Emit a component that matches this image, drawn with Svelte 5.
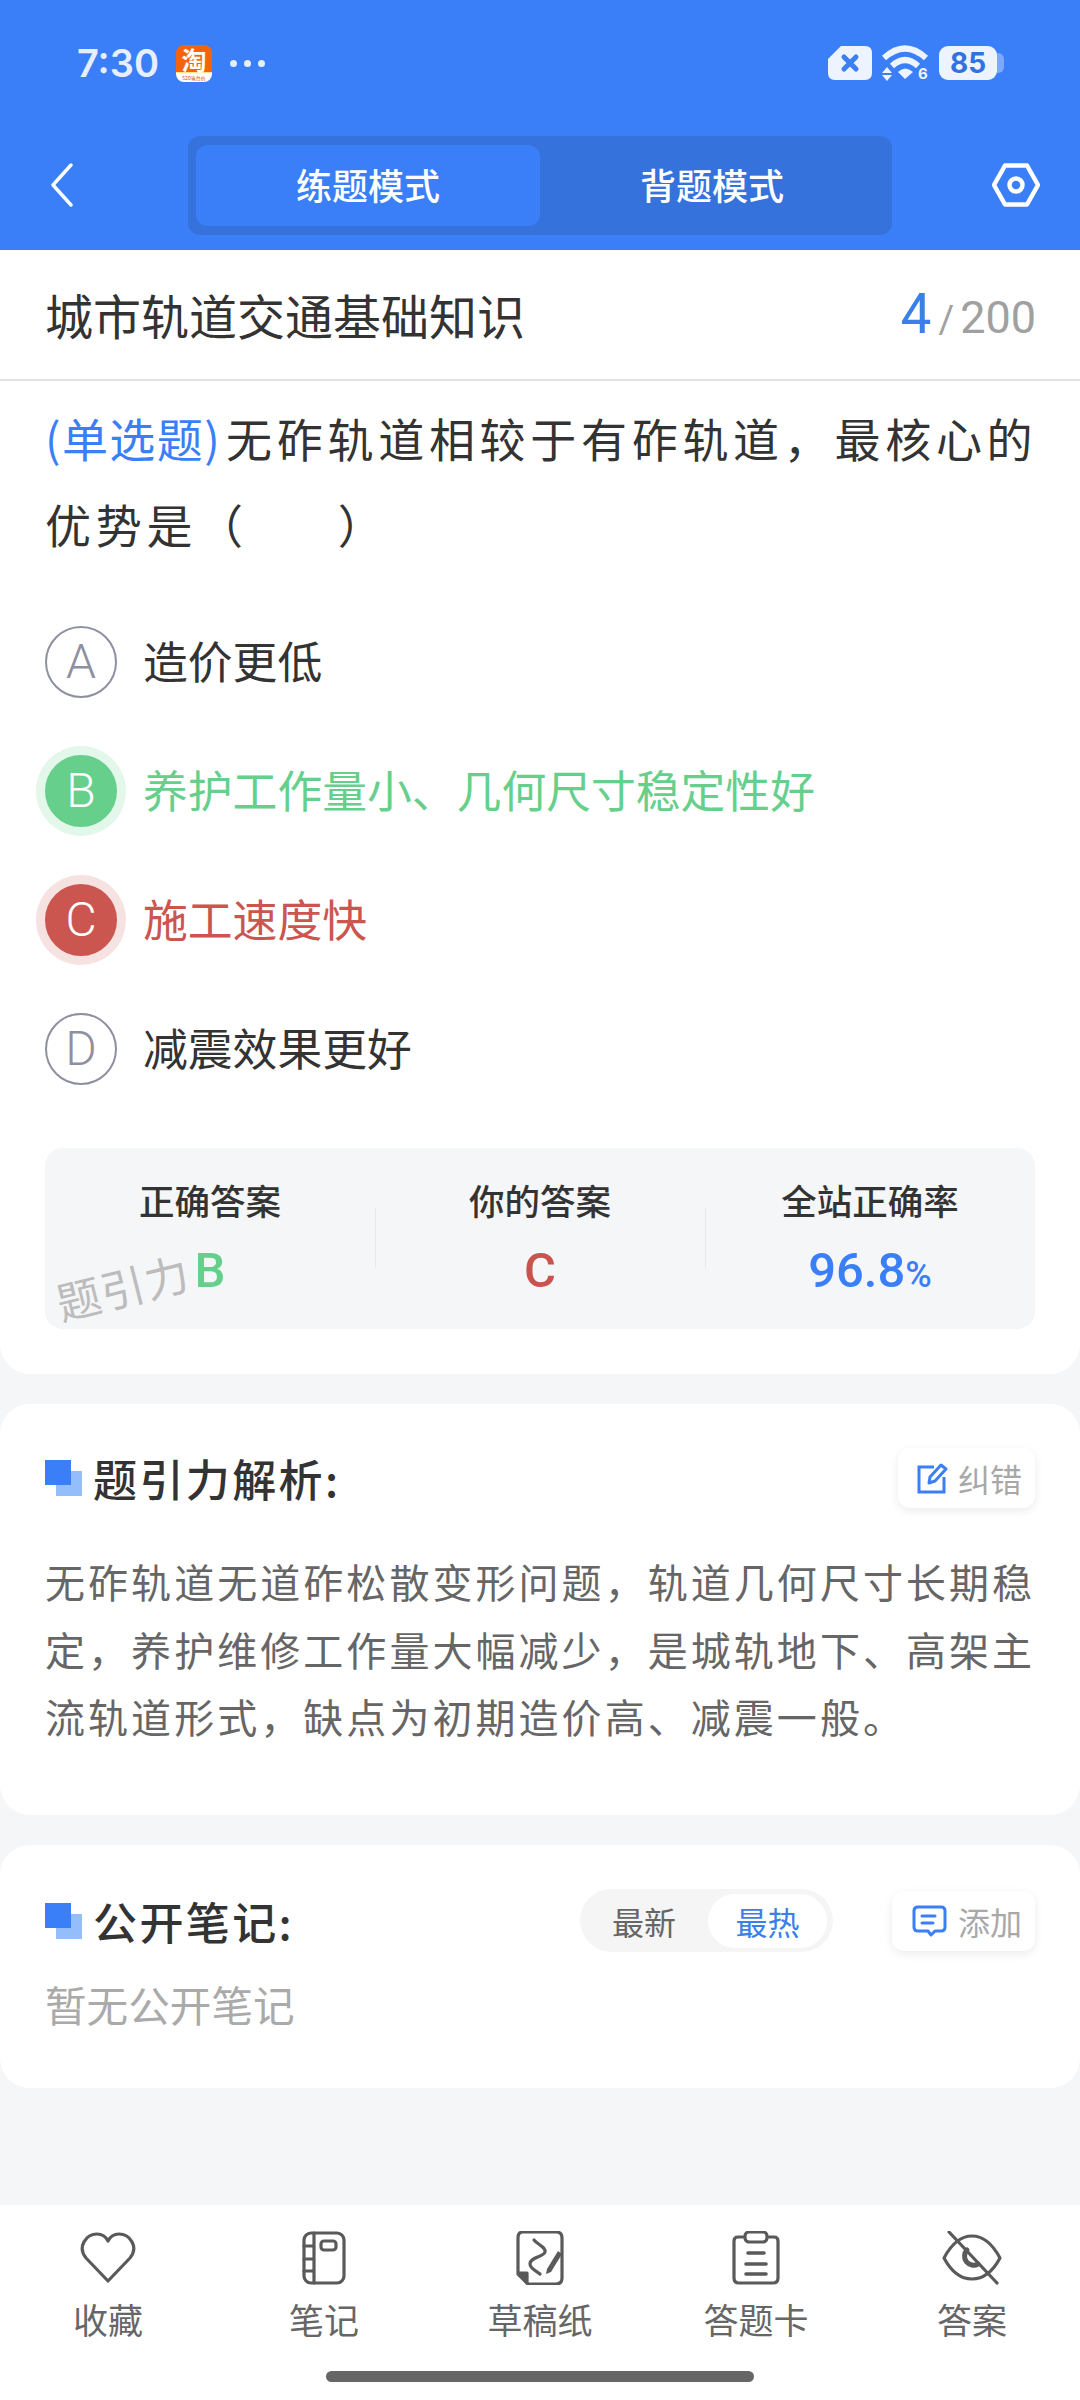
<script>
  const options = [
    { key: 'A', text: '造价更低', state: '' },
    { key: 'B', text: '养护工作量小、几何尺寸稳定性好', state: 'right' },
    { key: 'C', text: '施工速度快', state: 'wrong' },
    { key: 'D', text: '减震效果更好', state: '' }
  ];
  const tabs = [
    { id: 'heart', label: '收藏' },
    { id: 'book', label: '笔记' },
    { id: 'draft', label: '草稿纸' },
    { id: 'card', label: '答题卡' },
    { id: 'eye', label: '答案' }
  ];
</script>

<div class="page">
  <header class="top">
    <div class="status">
      <div class="status-left">
        <span class="clock">7:30</span>
        <span class="taobao">
          <span class="tb-main">淘</span>
          <span class="tb-sub">520当台价</span>
        </span>
        <span class="dots"><i></i><i></i><i></i></span>
      </div>
      <div class="status-right">
        <svg width="44" height="34" viewBox="0 0 44 34">
          <path d="M13 0H37Q44 0 44 7V27Q44 34 37 34H7Q0 34 0 27V13Z" fill="#edf3ff" />
          <path d="M16 11L28 23M28 11L16 23" stroke="#3b7ff5" stroke-width="5" stroke-linecap="round" />
        </svg>
        <svg class="wifi" width="47" height="36" viewBox="0 0 47 36">
          <path d="M2 13Q23 -6 44 13" fill="none" stroke="#edf3ff" stroke-width="6" />
          <path d="M10 21Q23 9 36 21" fill="none" stroke="#edf3ff" stroke-width="6" />
          <path d="M16 27Q23 20 31 27L23 34Z" fill="#edf3ff" />
          <path d="M5 22L10 28H0ZM0 30H10L5 36Z" fill="#edf3ff" />
          <text x="36" y="34" class="six">6</text>
        </svg>
        <span class="battery"><span class="level">85</span><span class="nub"></span></span>
      </div>
    </div>
    <div class="nav">
      <svg class="back" width="24" height="44" viewBox="0 0 24 44">
        <path d="M21 2L3 22L21 42" fill="none" stroke="#fff" stroke-width="3.4" stroke-linecap="round" stroke-linejoin="round" />
      </svg>
      <div class="mode">
        <div class="mode-item active">练题模式</div>
        <div class="mode-item">背题模式</div>
      </div>
      <svg width="48" height="44" viewBox="0 0 48 44">
        <path d="M13 2.5H35L46 22L35 41.5H13L2 22Z" fill="none" stroke="#fff" stroke-width="4.5" stroke-linejoin="round" />
        <circle cx="24" cy="22" r="6.5" fill="none" stroke="#fff" stroke-width="4.5" />
      </svg>
    </div>
  </header>

  <div class="subject">
    <span class="subject-name">城市轨道交通基础知识</span>
    <span class="count"><b>4</b><em>/</em>200</span>
  </div>

  <section class="card question">
    <p class="stem"><span class="type">(单选题)</span>无砟轨道相较于有砟轨道，最核心的优势是（&nbsp;&nbsp;&nbsp;&nbsp;&nbsp;&nbsp;）</p>
    <div class="options">
      {#each options as o}
        <div class="option {o.state}">
          <span class="bullet">{o.key}</span>
          <span class="option-text">{o.text}</span>
        </div>
      {/each}
    </div>
    <div class="stats">
      <div class="stat">
        <span class="stat-label">正确答案</span>
        <span class="stat-value green">B</span>
      </div>
      <div class="stat">
        <span class="stat-label">你的答案</span>
        <span class="stat-value red">C</span>
      </div>
      <div class="stat">
        <span class="stat-label">全站正确率</span>
        <span class="stat-value blue">96.8<small>%</small></span>
      </div>
      <span class="watermark">题引力</span>
    </div>
  </section>

  <section class="card analysis">
    <div class="head">
      <span class="mark"></span>
      <h2>题引力解析:</h2>
      <span class="chip">
        <svg width="31" height="31" viewBox="0 0 31 31">
          <path d="M17 4H2V29H27V14" fill="none" stroke="#3b7ff5" stroke-width="3" />
          <path d="M12 20L13 14L24 2L29 6L18 18Z" fill="none" stroke="#3b7ff5" stroke-width="3" stroke-linejoin="round" />
        </svg>
        纠错
      </span>
    </div>
    <p class="explain">无砟轨道无道砟松散变形问题，轨道几何尺寸长期稳定，养护维修工作量大幅减少，是城轨地下、高架主流轨道形式，缺点为初期造价高、减震一般。</p>
  </section>

  <section class="card notes">
    <div class="head">
      <span class="mark"></span>
      <h2>公开笔记:</h2>
      <div class="sort">
        <span>最新</span>
        <span class="on">最热</span>
      </div>
      <span class="chip add">
        <svg width="35" height="32" viewBox="0 0 35 32">
          <path d="M6 2H29Q33 2 33 6V22Q33 26 29 26H23L19 30L16 26H6Q2 26 2 22V6Q2 2 6 2Z" fill="none" stroke="#3b7ff5" stroke-width="3" stroke-linejoin="round" />
          <path d="M10 11H23M10 18H21" stroke="#3b7ff5" stroke-width="3" stroke-linecap="round" />
        </svg>
        添加
      </span>
    </div>
    <p class="empty">暂无公开笔记</p>
  </section>

  <div class="spacer"></div>

  <footer class="bottom">
    <div class="tabs">
      {#each tabs as t}
        <div class="tab">
          <svg width="60" height="54" viewBox="0 0 60 54">
            {#if t.id === 'heart'}
              <path d="M30 50L8 27C-1 16 8 3 19 3C24 3 28 6 30 10C32 6 36 3 41 3C52 3 61 16 52 27Z" />
            {:else if t.id === 'book'}
              <rect x="10" y="2" width="40" height="50" rx="7" />
              <path d="M20 2V52M10 15H20M10 28H20M10 40H20" />
              <rect x="27" y="10" width="15" height="9" rx="3" />
            {:else if t.id === 'draft'}
              <path d="M13 1H46Q52 1 52 7V47Q52 53 46 53H18L8 43V7Q8 1 13 1Z" />
              <path d="M9 42H17V52Z" fill="#5a5a5a" />
              <path d="M24 9C28 14 36 16 35 21C34 26 20 26 20 33C20 38 27 40 30 43" />
              <path d="M37 38L48 20L52 23L41 41L36 43Z" fill="#5a5a5a" stroke="none" />
            {:else if t.id === 'card'}
              <path d="M17 6H12Q8 6 8 10V47Q8 52 13 52H47Q52 52 52 47V10Q52 6 48 6H43" />
              <rect x="19" y="1" width="22" height="10" rx="4" />
              <path d="M22 22H38M20 33H40M20 43H40" stroke-width="3.6" />
            {:else}
              <path d="M2 27C10 12 20 5 30 5C40 5 50 12 58 27C50 42 40 48 30 48C20 48 10 42 2 27Z" />
              <path d="M25 19A9 9 0 0 0 36 33" stroke-width="5" />
              <path d="M7 1L55 52" />
            {/if}
          </svg>
          <span>{t.label}</span>
        </div>
      {/each}
    </div>
    <div class="home"></div>
  </footer>
</div>

<style>
  :global(body) {
    margin: 0;
    background: #f5f6f8;
  }

  .page {
    height: 2400px;
    display: flex;
    flex-direction: column;
    background: #f5f6f8;
    font-family: "Noto Sans CJK SC", Roboto, sans-serif;
    color: #333;
  }

  p, h2 {
    margin: 0;
  }

  .top {
    height: 250px;
    box-sizing: border-box;
    background: #3b7ff8;
  }

  .status {
    height: 126px;
    padding: 0 76px 0 77px;
    display: flex;
    align-items: center;
    justify-content: space-between;
  }

  .status-left, .status-right {
    display: flex;
    align-items: center;
  }

  .clock {
    font-family: Inter, Roboto, sans-serif;
    font-size: 38px;
    font-weight: 600;
    color: #e6eeff;
    width: 99px;
  }

  .taobao {
    position: relative;
    width: 36px;
    height: 37px;
    border-radius: 8px;
    background: linear-gradient(#f5640c 72%, #ffd83c 72%, #fff 78%);
    display: block;
    text-align: center;
  }

  .tb-main {
    display: block;
    color: #fff;
    font-size: 25px;
    line-height: 28px;
    font-weight: 700;
  }

  .tb-sub {
    position: absolute;
    left: 0;
    right: 0;
    bottom: 0;
    font-size: 5px;
    line-height: 9px;
    color: #d8430c;
    white-space: nowrap;
  }

  .dots {
    display: flex;
    gap: 7px;
    margin-left: 18px;
  }

  .dots i {
    width: 7px;
    height: 7px;
    border-radius: 50%;
    background: #e6eeff;
  }

  .status-right {
    gap: 10px;
  }

  .wifi {
    overflow: visible;
  }

  .six {
    font-family: Inter, sans-serif;
    font-size: 15px;
    font-weight: 700;
    fill: #edf3ff;
  }

  .battery {
    display: flex;
    align-items: center;
  }

  .level {
    width: 58px;
    height: 34px;
    border-radius: 9px;
    background: #edf3ff;
    color: #3272dc;
    font-family: Inter, Roboto, sans-serif;
    font-size: 28px;
    font-weight: 700;
    line-height: 34px;
    text-align: center;
  }

  .nub {
    width: 7px;
    height: 20px;
    border-radius: 0 6px 6px 0;
    background: #7fa9f8;
  }

  .nav {
    height: 124px;
    box-sizing: border-box;
    padding: 0 40px 6px 50px;
    display: flex;
    align-items: center;
    justify-content: space-between;
  }

  .mode {
    width: 704px;
    height: 99px;
    box-sizing: border-box;
    padding: 9px 8px;
    margin-left: 14px;
    background: #3672dc;
    border-radius: 12px;
    display: flex;
  }

  .mode-item {
    flex: 1;
    border-radius: 12px;
    color: #fff;
    font-size: 36px;
    font-weight: 500;
    line-height: 78px;
    text-align: center;
  }

  .mode-item.active {
    background: #3b7ff8;
  }

  .subject {
    height: 131px;
    box-sizing: border-box;
    padding: 0 44px 2px 45px;
    background: #fff;
    border-bottom: 2px solid #e2e2e2;
    display: flex;
    align-items: center;
    justify-content: space-between;
  }

  .subject-name {
    font-size: 48px;
    color: #333;
  }

  .count {
    font-family: Roboto, sans-serif;
    font-size: 45px;
    color: #a0a0a0;
  }

  .count b {
    font-size: 55px;
    font-weight: 400;
    color: #3b7fe8;
  }

  .count em {
    font-style: normal;
    margin: 0 6px 0 7px;
    font-size: 38px;
  }

  .card {
    background: #fff;
    border-radius: 30px;
    box-sizing: border-box;
    padding: 0 45px;
  }

  .question {
    height: 993px;
    border-radius: 0 0 30px 30px;
  }

  .stem {
    padding-top: 13px;
    margin-right: -6px;
    font-size: 46px;
    line-height: 86px;
    letter-spacing: 4.7px;
    color: #333;
  }

  .type {
    color: #3b7ff8;
    letter-spacing: 1.4px;
    margin-right: 5px;
  }

  .options {
    margin-top: 60px;
    display: flex;
    flex-direction: column;
    gap: 57px;
  }

  .option {
    height: 72px;
    display: flex;
    align-items: center;
    gap: 26px;
    font-size: 44.8px;
    color: #333;
  }

  .option-text {
    padding-bottom: 6px;
  }

  .bullet {
    width: 72px;
    height: 72px;
    flex: none;
    box-sizing: border-box;
    border: 2px solid #8e90a2;
    border-radius: 50%;
    color: #8e90a2;
    font-family: Roboto, sans-serif;
    font-size: 48px;
    font-weight: 300;
    line-height: 68px;
    text-align: center;
  }

  .option.right { color: #66cf8b; }
  .option.wrong { color: #cb5650; }

  .right .bullet {
    background: #66cf8b;
    border-color: #66cf8b;
    color: #fff;
    box-shadow: 0 0 0 9px #e3f7ea;
  }

  .wrong .bullet {
    background: #cb5650;
    border-color: #cb5650;
    color: #fff;
    box-shadow: 0 0 0 9px #f6e2e1;
  }

  .stats {
    position: relative;
    margin-top: 63px;
    height: 181px;
    background: #f5f6f8;
    border-radius: 18px;
    display: flex;
  }

  .stat {
    flex: 1;
    display: flex;
    flex-direction: column;
    align-items: center;
    padding-top: 32px;
    position: relative;
  }

  .stat + .stat::before {
    content: '';
    position: absolute;
    left: 0;
    top: 60px;
    height: 60px;
    width: 1px;
    background: #e8e9ec;
  }

  .stat-label {
    font-size: 35.5px;
    font-weight: 500;
    line-height: 40px;
    color: #333;
  }

  .stat-value {
    font-family: Roboto, sans-serif;
    font-size: 49px;
    font-weight: 500;
    line-height: 56px;
    margin-top: 23px;
  }

  .stat-value small {
    font-size: 36px;
  }

  .green { color: #66cf8b; }
  .red { color: #c9534e; }
  .blue { color: #3b7ff8; }

  .watermark {
    position: absolute;
    left: 10px;
    top: 113px;
    font-size: 44px;
    line-height: 50px;
    color: #bcbcbc;
    transform: rotate(-14deg);
    letter-spacing: 1px;
  }

  .analysis {
    margin-top: 30px;
    height: 411px;
    padding-top: 44px;
  }

  .notes {
    margin-top: 30px;
    height: 243px;
    padding-top: 46px;
  }

  .head {
    position: relative;
    height: 60px;
    display: flex;
    align-items: center;
  }

  .mark {
    position: relative;
    width: 37px;
    height: 36px;
    flex: none;
    margin-right: 11px;
  }

  .mark::before, .mark::after {
    content: '';
    position: absolute;
    width: 26px;
    height: 25px;
  }

  .mark::after {
    left: 0;
    top: 0;
    background: #3b7ff8;
  }

  .mark::before {
    right: 0;
    bottom: 0;
    background: #93bdfb;
  }

  h2 {
    font-size: 44px;
    font-weight: 500;
    color: #333;
    letter-spacing: 2.4px;
  }

  .chip {
    margin-left: auto;
    height: 60px;
    box-sizing: border-box;
    padding: 0 13px 0 19px;
    background: #fff;
    border-radius: 12px;
    box-shadow: 0 3px 10px rgba(0, 0, 0, 0.08);
    display: flex;
    align-items: center;
    gap: 10px;
    font-size: 32px;
    color: #a8a8a8;
  }

  .explain {
    margin-top: 40px;
    margin-right: -6px;
    font-size: 40px;
    line-height: 67.5px;
    letter-spacing: 3.05px;
    color: #666;
  }

  .sort {
    position: absolute;
    left: 535px;
    top: -2px;
    width: 253px;
    height: 63px;
    box-sizing: border-box;
    background: #f5f5f5;
    border-radius: 32px;
    display: flex;
    align-items: center;
    font-size: 32px;
    color: #666;
  }

  .sort span {
    flex: none;
    width: 128px;
    text-align: center;
  }

  .sort .on {
    width: 119px;
    height: 54px;
    line-height: 54px;
    background: #fff;
    border-radius: 28px;
    color: #3b7fe8;
  }

  .add {
    padding-left: 20px;
    gap: 11px;
  }

  .empty {
    margin-top: 25px;
    font-size: 41.6px;
    line-height: 56px;
    color: #aaa;
  }

  .spacer {
    flex: 1;
  }

  .bottom {
    height: 195px;
    background: #fff;
    display: flex;
    flex-direction: column;
  }

  .tabs {
    display: flex;
    padding-top: 26px;
  }

  .tab {
    flex: 1;
    display: flex;
    flex-direction: column;
    align-items: center;
    gap: 12px;
    font-size: 35px;
    line-height: 44px;
    color: #666;
  }

  .tab svg {
    fill: none;
    stroke: #5a5a5a;
    stroke-width: 3.2;
    stroke-linejoin: round;
    stroke-linecap: round;
  }

  .home {
    width: 428px;
    height: 11px;
    margin: 30px auto 0;
    border-radius: 6px;
    background: #666;
  }
</style>
